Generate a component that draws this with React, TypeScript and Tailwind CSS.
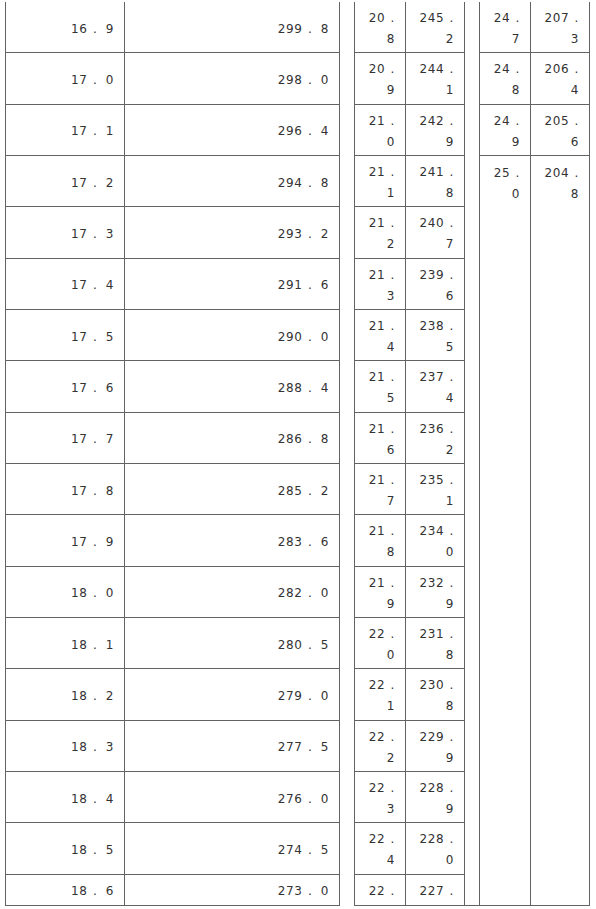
const left: [string, string][] = [
  ["16.9", "299.8"],
  ["17.0", "298.0"],
  ["17.1", "296.4"],
  ["17.2", "294.8"],
  ["17.3", "293.2"],
  ["17.4", "291.6"],
  ["17.5", "290.0"],
  ["17.6", "288.4"],
  ["17.7", "286.8"],
  ["17.8", "285.2"],
  ["17.9", "283.6"],
  ["18.0", "282.0"],
  ["18.1", "280.5"],
  ["18.2", "279.0"],
  ["18.3", "277.5"],
  ["18.4", "276.0"],
  ["18.5", "274.5"],
  ["18.6", "273.0"],
];

// last row is clipped in the source, only the first line shows
const middle: [string, string][] = [
  ["20.8", "245.2"],
  ["20.9", "244.1"],
  ["21.0", "242.9"],
  ["21.1", "241.8"],
  ["21.2", "240.7"],
  ["21.3", "239.6"],
  ["21.4", "238.5"],
  ["21.5", "237.4"],
  ["21.6", "236.2"],
  ["21.7", "235.1"],
  ["21.8", "234.0"],
  ["21.9", "232.9"],
  ["22.0", "231.8"],
  ["22.1", "230.8"],
  ["22.2", "229.9"],
  ["22.3", "228.9"],
  ["22.4", "228.0"],
  ["22.", "227."],
];

const right: [string, string][] = [
  ["24.7", "207.3"],
  ["24.8", "206.4"],
  ["24.9", "205.6"],
  ["25.0", "204.8"],
];

function Num({ v }: { v: string }) {
  const [i, d] = v.split(".");
  return (
    <span>
      {i} <span className="ml-[1px]">.</span>
      {d ? (
        <>
          {" "}
          <span className="ml-[4px]">{d}</span>
        </>
      ) : null}
    </span>
  );
}

function Row({
  pair,
  widths,
  last,
  narrow,
}: {
  pair: [string, string];
  widths: [string, string];
  last?: boolean;
  narrow?: boolean;
}) {
  const h = last ? "h-[31px]" : "h-[51.34px]";
  return (
    <div className={`flex ${h} shrink-0 border-b border-[#636363]`}>
      {pair.map((v, i) => (
        <div
          key={i}
          className={`${widths[i]} flex items-center-safe justify-end overflow-hidden border-r border-[#636363] pt-[4px] text-right ${
            narrow ? "pl-[5px] pr-[10px]" : "pr-[10px]"
          }`}
        >
          <div>
            <Num v={v} />
          </div>
        </div>
      ))}
    </div>
  );
}

export default function App() {
  return (
    <div
      className="flex h-[909px] w-[596px] bg-white pl-[5px] pt-[2px] text-[12px] leading-[21px] tracking-[0.6px] text-[#333]"
      style={{ fontFamily: '"DejaVu Sans", sans-serif' }}
    >
      {/* first block */}
      <div className="flex h-[904px] flex-col border-l border-[#636363]">
        {left.map((p, i) => (
          <Row key={i} pair={p} widths={["w-[119px]", "w-[215px]"]} last={i === left.length - 1} />
        ))}
      </div>

      <div className="w-[14px]" />

      {/* second block */}
      <div className="flex h-[904px] flex-col border-l border-[#636363]">
        {middle.map((p, i) => (
          <Row key={i} pair={p} widths={["w-[51px]", "w-[59px]"]} last={i === middle.length - 1} narrow />
        ))}
      </div>

      <div className="h-[904px] w-[14px] border-b border-[#636363]" />

      {/* third block */}
      <div className="flex h-[904px] border-b border-l border-[#636363]">
        {[0, 1].map((col) => (
          <div
            key={col}
            className={`${col === 0 ? "w-[51px]" : "w-[59px]"} flex h-full flex-col border-r border-[#636363]`}
          >
            {right.map((p, i) => (
              <div
                key={i}
                className={`flex h-[51.34px] shrink-0 items-center justify-end pl-[5px] pr-[10px] pt-[4px] text-right ${
                  i < right.length - 1 ? "border-b border-[#636363]" : ""
                }`}
              >
                <div>
                  <Num v={p[col]} />
                </div>
              </div>
            ))}
          </div>
        ))}
      </div>
    </div>
  );
}
